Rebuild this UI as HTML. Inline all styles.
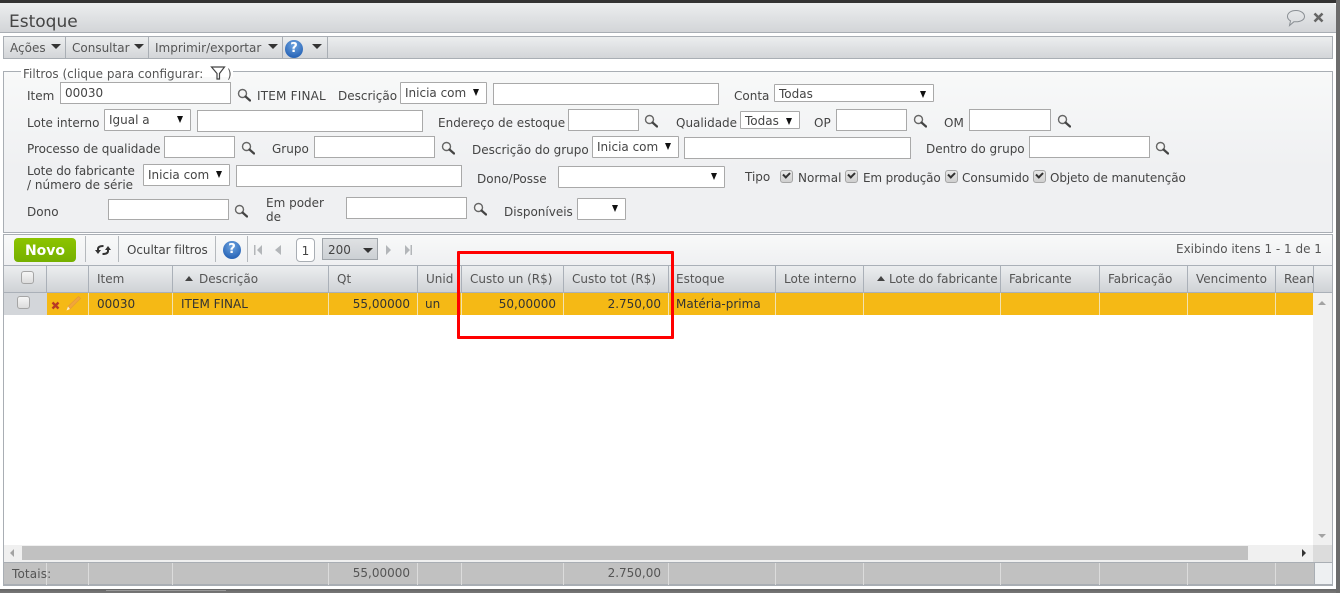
<!DOCTYPE html>
<html lang="pt"><head><meta charset="utf-8"><title>Estoque</title>
<style>
html,body{margin:0;padding:0}
body{width:1340px;height:593px;position:relative;overflow:hidden;background:#fff;font-family:"DejaVu Sans","Liberation Sans",sans-serif;font-size:12px;color:#444}
div,span.a,svg.a{position:absolute;box-sizing:border-box}
.t{white-space:nowrap;line-height:14px;color:#444}
.i{background:#fff;border:1px solid #a9a9a9;color:#444;line-height:21px;padding-left:4px;white-space:nowrap}
.s{background:#fff;border:1px solid #a9a9a9;color:#444;line-height:21px;padding-left:4px;white-space:nowrap;border-radius:1px}
.s:after{content:"";position:absolute;right:7px;top:6px;border-left:3.5px solid transparent;border-right:3.5px solid transparent;border-top:7px solid #111}
.h{top:265px;height:28px;border-right:1px solid #aab0b8;line-height:29px;padding-left:8px;color:#555;white-space:nowrap;overflow:hidden}
.r{top:293px;height:22px;border-right:1px solid #f2e2b0;line-height:22px;padding:0 7px;color:#333;white-space:nowrap;background:#f5b915}
.f{top:563px;height:22px;border-right:1px solid #dcdcdc;line-height:21px;padding:0 7px;color:#555;text-align:right}
.m{border-right:1px solid #a9aeb4;height:22px;top:36px;line-height:24px;color:#555;padding-left:6px;white-space:nowrap}
.ar{position:absolute;top:8px;border-left:5px solid transparent;border-right:5px solid transparent;border-top:5px solid #333}
.c{width:13px;height:13px;background:linear-gradient(#e8e8e8,#cfcfcf);border:1px solid #a5a5a5;border-radius:3px}
.c:after{content:"";position:absolute;left:2px;top:1px;width:5px;height:3px;border-left:2px solid #333;border-bottom:2px solid #333;transform:rotate(-45deg)}
.b{width:13px;height:13px;background:linear-gradient(#f6f6f6,#dcdcdc);border:1px solid #a5a5a5;border-radius:3px}
.q{width:18px;height:18px;border-radius:50%;background:radial-gradient(circle at 50% 30%,#6fa5e0,#2a66b8 75%);color:#fff;font-weight:bold;text-align:center;line-height:18px;font-size:13px}
</style></head><body>
<svg width="0" height="0" style="position:absolute"><defs><symbol id="l" viewBox="0 0 14 14"><circle cx="5.500" cy="5.500" r="4" fill="#f4f4f4" stroke="#666" stroke-width="1.400"/><path d="M8.500 8.500L13 12.500" stroke="#444" stroke-width="2.200" stroke-linecap="round"/></symbol></defs></svg>

<!-- window frame -->
<div style="left:0;top:0;width:1340px;height:3px;background:#333"></div>
<div style="left:1336px;top:0;width:4px;height:593px;background:#6c6c6c"></div>
<div style="left:0;top:3px;width:1336px;height:30px;background:linear-gradient(#eceeef,#d3d5d8);border-bottom:1px solid #a9aeb4;border-top-right-radius:4px"></div>
<div style="left:0;top:586px;width:1336px;height:7px;background:linear-gradient(#fff 0,#fff 3px,#666 3px,#777)"></div>
<div style="left:106px;top:590px;width:120px;height:1px;background:#999"></div>
<div class="t" style="left:9px;top:12px;font-size:17px;line-height:20px;color:#444">Estoque</div>
<svg class="a" style="left:1286px;top:9px" width="20" height="18" viewBox="0 0 20 18"><path d="M10 1.500C5 1.500 1.500 3.900 1.500 7.500c0 2 1.400 3.500 3 4.300L3.500 16.500l4.500-3.800c.7.100 1.300.100 2 .100 5 0 8.500-2.200 8.500-5.300S15 1.500 10 1.500z" fill="none" stroke="#8a8f94" stroke-width="1"/></svg>
<svg class="a" style="left:1313px;top:12px" width="11" height="11" viewBox="0 0 11 11"><path d="M1.500 1.500L9.500 9.500M9.500 1.500L1.500 9.500" stroke="#666" stroke-width="2.600"/></svg>

<!-- menu bar -->
<div style="left:3px;top:36px;width:1330px;height:23px;background:linear-gradient(#eceeef,#d3d5d8);border:1px solid #a9aeb4"></div>
<div class="m" style="left:3px;width:63px;padding-left:7px">Ações<span class="ar" style="left:48px"></span></div>
<div class="m" style="left:66px;width:83px">Consultar<span class="ar" style="left:68px"></span></div>
<div class="m" style="left:149px;width:134px">Imprimir/exportar<span class="ar" style="left:119px"></span></div>
<div class="m" style="left:283px;width:45px"><span class="ar" style="left:29px"></span></div>
<div class="q" style="left:285px;top:40px">?</div>

<!-- filter box -->
<div style="left:3px;top:71px;width:1330px;height:162px;background:linear-gradient(#f8f9f9,#eff0f2 60%);border:1px solid #a9aeb4"></div>
<div class="t" style="left:21px;top:67px;background:#fff;padding:0 3px;color:#555;height:10px;width:212px"></div>
<div class="t" style="left:23px;top:67px;color:#555">Filtros (clique para configurar:</div>
<svg class="a" style="left:210px;top:66px" width="16" height="14" viewBox="0 0 16 14"><path d="M1.500 1h13L9.500 7.500V13H7V7.500z" fill="none" stroke="#444" stroke-width="1.200"/></svg>
<div class="t" style="left:227px;top:67px;color:#555">)</div>

<div class="t" style="left:27px;top:89px">Item</div>
<div class="i" style="left:60px;top:82px;width:171px;height:22px">00030</div>
<svg class="a" style="left:237px;top:88px" width="14" height="14"><use href="#l"/></svg>
<div class="t" style="left:257px;top:89px;letter-spacing:.2px">ITEM FINAL</div>
<div class="t" style="left:338px;top:89px">Descrição</div>
<div class="s" style="left:400px;top:82px;width:87px;height:22px">Inicia com</div>
<div class="i" style="left:493px;top:83px;width:226px;height:22px"></div>
<div class="t" style="left:734px;top:89px">Conta</div>
<div class="s" style="left:774px;top:84px;width:160px;height:18px;line-height:18px">Todas</div>

<div class="t" style="left:27px;top:116px">Lote interno</div>
<div class="s" style="left:104px;top:109px;width:87px;height:22px">Igual a</div>
<div class="i" style="left:197px;top:110px;width:226px;height:22px"></div>
<div class="t" style="left:438px;top:116px">Endereço de estoque</div>
<div class="i" style="left:568px;top:109px;width:71px;height:22px"></div>
<svg class="a" style="left:644px;top:114px" width="14" height="14"><use href="#l"/></svg>
<div class="t" style="left:676px;top:116px">Qualidade</div>
<div class="s" style="left:740px;top:111px;width:60px;height:18px;line-height:18px">Todas</div>
<div class="t" style="left:814px;top:116px">OP</div>
<div class="i" style="left:836px;top:109px;width:71px;height:22px"></div>
<svg class="a" style="left:913px;top:114px" width="14" height="14"><use href="#l"/></svg>
<div class="t" style="left:944px;top:116px">OM</div>
<div class="i" style="left:969px;top:109px;width:82px;height:22px"></div>
<svg class="a" style="left:1057px;top:114px" width="14" height="14"><use href="#l"/></svg>

<div class="t" style="left:27px;top:142px;letter-spacing:-.06px">Processo de qualidade</div>
<div class="i" style="left:164px;top:136px;width:71px;height:22px"></div>
<svg class="a" style="left:241px;top:141px" width="14" height="14"><use href="#l"/></svg>
<div class="t" style="left:272px;top:142px">Grupo</div>
<div class="i" style="left:314px;top:136px;width:121px;height:22px"></div>
<svg class="a" style="left:441px;top:141px" width="14" height="14"><use href="#l"/></svg>
<div class="t" style="left:472px;top:143px">Descrição do grupo</div>
<div class="s" style="left:592px;top:136px;width:87px;height:22px">Inicia com</div>
<div class="i" style="left:684px;top:137px;width:227px;height:22px"></div>
<div class="t" style="left:926px;top:142px">Dentro do grupo</div>
<div class="i" style="left:1029px;top:136px;width:121px;height:22px"></div>
<svg class="a" style="left:1155px;top:141px" width="14" height="14"><use href="#l"/></svg>

<div class="t" style="left:27px;top:164px;letter-spacing:-.1px">Lote do fabricante</div>
<div class="t" style="left:27px;top:178px">/ número de série</div>
<div class="s" style="left:143px;top:164px;width:87px;height:22px">Inicia com</div>
<div class="i" style="left:236px;top:165px;width:226px;height:22px"></div>
<div class="t" style="left:477px;top:172px">Dono/Posse</div>
<div class="s" style="left:558px;top:166px;width:167px;height:22px"></div>
<div class="t" style="left:745px;top:170px">Tipo</div>
<div class="c" style="left:780px;top:170px"></div><div class="t" style="left:798px;top:171px">Normal</div>
<div class="c" style="left:845px;top:170px"></div><div class="t" style="left:863px;top:171px;letter-spacing:-.15px">Em produção</div>
<div class="c" style="left:945px;top:170px"></div><div class="t" style="left:962px;top:171px">Consumido</div>
<div class="c" style="left:1033px;top:170px"></div><div class="t" style="left:1050px;top:171px;letter-spacing:-.1px">Objeto de manutenção</div>

<div class="t" style="left:27px;top:205px">Dono</div>
<div class="i" style="left:108px;top:199px;width:121px;height:21px"></div>
<svg class="a" style="left:234px;top:204px" width="14" height="14"><use href="#l"/></svg>
<div class="t" style="left:266px;top:196px">Em poder</div>
<div class="t" style="left:266px;top:210px">de</div>
<div class="i" style="left:346px;top:197px;width:121px;height:22px"></div>
<svg class="a" style="left:473px;top:202px" width="14" height="14"><use href="#l"/></svg>
<div class="t" style="left:504px;top:205px">Disponíveis</div>
<div class="s" style="left:577px;top:198px;width:49px;height:22px"></div>

<!-- grid -->
<div style="left:3px;top:234px;width:1330px;height:352px;background:#fff;border:1px solid #a9aeb4"></div>
<div style="left:4px;top:235px;width:1328px;height:30px;background:linear-gradient(#f8f9f9,#eff0f2)"></div>
<div style="left:14px;top:238px;width:62px;height:24px;background:linear-gradient(#8cc400,#76b000);border-radius:4px;color:#fff;font-weight:bold;font-size:14px;line-height:27px;text-align:center;font-family:'DejaVu Sans',sans-serif">Novo</div>
<div style="left:85px;top:236px;width:1px;height:26px;background:#b5b9bd"></div>
<svg class="a" style="left:95px;top:243px" width="16" height="14" viewBox="0 0 16 14"><path d="M3 8V6C3 3.800 5 3 8.500 3" fill="none" stroke="#333" stroke-width="2"/><path d="M0 7h6L3 11z" fill="#333"/><path d="M13 6v2c0 2.200-2 3-5.500 3" fill="none" stroke="#333" stroke-width="2"/><path d="M10 7h6L13 3z" fill="#333"/></svg>
<div style="left:118px;top:236px;width:1px;height:26px;background:#b5b9bd"></div>
<div class="t" style="left:127px;top:243px;color:#444;letter-spacing:-.06px">Ocultar filtros</div>
<div style="left:215px;top:236px;width:1px;height:26px;background:#b5b9bd"></div>
<div class="q" style="left:223px;top:241px">?</div>
<div style="left:247px;top:236px;width:1px;height:26px;background:#b5b9bd"></div>
<svg class="a" style="left:253px;top:245px" width="160" height="10" viewBox="0 0 160 10"><g fill="#b3b6b9"><rect x="1" y="0" width="1.500" height="10"/><path d="M9 0v10L4 5zM28 0v10l-6-5zM133 0v10l5-5zM152 0v10l5-5z"/><rect x="157.500" y="0" width="1.500" height="10"/></g></svg>
<div style="left:296px;top:238px;width:19px;height:24px;background:#fff;border:1px solid #a9aeb4;border-radius:4px;text-align:center;line-height:24px;color:#444">1</div>
<div style="left:322px;top:238px;width:56px;height:22px;background:linear-gradient(#dfe1e3,#ccd0d4);border:1px solid #a0a5aa;line-height:22px;padding-left:5px;color:#444">200<span style="position:absolute;left:40px;top:9px;border-left:5px solid transparent;border-right:5px solid transparent;border-top:5px solid #333"></span></div>
<div class="t" style="left:1176px;top:242px;color:#555">Exibindo itens 1 - 1 de 1</div>

<!-- header -->
<div style="left:4px;top:265px;width:1328px;height:28px;background:linear-gradient(#eceef0,#cfd2d6);border-top:1px solid #aab0b8;border-bottom:1px solid #aab0b8"></div>
<div class="h" style="left:4px;width:43px"></div>
<div class="b" style="left:21px;top:271px"></div>
<div class="h" style="left:47px;width:42px"></div>
<div class="h" style="left:89px;width:84px">Item</div>
<div class="h" style="left:173px;width:156px;padding-left:26px">Descrição<span style="position:absolute;left:12px;top:11px;border-left:4px solid transparent;border-right:4px solid transparent;border-bottom:5px solid #444"></span></div>
<div class="h" style="left:329px;width:89px">Qt</div>
<div class="h" style="left:418px;width:44px">Unid</div>
<div class="h" style="left:462px;width:102px">Custo un (R$)</div>
<div class="h" style="left:564px;width:105px">Custo tot (R$)</div>
<div class="h" style="left:669px;width:107px;padding-left:7px">Estoque</div>
<div class="h" style="left:776px;width:88px">Lote interno</div>
<div class="h" style="left:864px;width:137px;padding-left:25px;letter-spacing:-.06px">Lote do fabricante<span style="position:absolute;left:13px;top:11px;border-left:4px solid transparent;border-right:4px solid transparent;border-bottom:5px solid #444"></span></div>
<div class="h" style="left:1001px;width:99px">Fabricante</div>
<div class="h" style="left:1100px;width:88px">Fabricação</div>
<div class="h" style="left:1188px;width:88px">Vencimento</div>
<div class="h" style="left:1276px;width:38px">Reanálise</div>

<!-- row -->
<div style="left:4px;top:293px;width:43px;height:22px;background:#d3d6da"></div>
<div class="b" style="left:17px;top:296px"></div>
<div class="r" style="left:47px;width:42px"></div>
<svg class="a" style="left:51px;top:301px" width="9" height="9" viewBox="0 0 9 9"><path d="M1.500 1.500l6 6M7.500 1.500l-6 6" stroke="#b83a24" stroke-width="2.400"/></svg>
<svg class="a" style="left:65px;top:295px" width="17" height="17" viewBox="0 0 17 17"><path d="M3 11.500L13.500 1.500l2 2L5 14z" fill="#f2a63a" stroke="#e59a35" stroke-width=".7"/><path d="M3 11.500L1.500 15.500 5 14z" fill="#fbeed0"/></svg>
<div class="r" style="left:89px;width:84px;padding-left:8px">00030</div>
<div class="r" style="left:173px;width:156px;padding-left:8px">ITEM FINAL</div>
<div class="r" style="left:329px;width:89px;text-align:right">55,00000</div>
<div class="r" style="left:418px;width:44px">un</div>
<div class="r" style="left:462px;width:102px;text-align:right">50,00000</div>
<div class="r" style="left:564px;width:105px;text-align:right">2.750,00</div>
<div class="r" style="left:669px;width:107px">Matéria-prima</div>
<div class="r" style="left:776px;width:88px"></div>
<div class="r" style="left:864px;width:137px"></div>
<div class="r" style="left:1001px;width:99px"></div>
<div class="r" style="left:1100px;width:88px"></div>
<div class="r" style="left:1188px;width:88px"></div>
<div class="r" style="left:1276px;width:37px;border-right:0"></div>

<!-- scrollbars -->
<div style="left:1313px;top:293px;width:19px;height:252px;background:#f0f0f0"></div>
<div style="left:1318px;top:301px;border-left:4px solid transparent;border-right:4px solid transparent;border-bottom:4px solid #a3a3a3"></div>
<div style="left:1318px;top:534px;border-left:4px solid transparent;border-right:4px solid transparent;border-top:4px solid #a3a3a3"></div>
<div style="left:4px;top:545px;width:1309px;height:17px;background:#f0f0f0"></div>
<div style="left:22px;top:546px;width:1226px;height:14px;background:#c1c1c1"></div>
<div style="left:1313px;top:545px;width:19px;height:17px;background:#dcdcdc"></div>
<div style="left:10px;top:549px;border-top:4px solid transparent;border-bottom:4px solid transparent;border-right:4px solid #a3a3a3"></div>
<div style="left:1302px;top:549px;border-top:4px solid transparent;border-bottom:4px solid transparent;border-left:4px solid #333"></div>

<!-- totals -->
<div style="left:4px;top:562px;width:1310px;height:24px;background:#c1c1c1;border-top:1px solid #a9aeb4;border-bottom:2px solid #a9aeb4"></div>
<div style="left:1314px;top:562px;width:18px;height:24px;background:#eef0f2;border-top:1px solid #a9aeb4;border-bottom:2px solid #a9aeb4;border-left:1px solid #a9aeb4"></div>
<div class="f" style="left:4px;width:43px"></div>
<div class="f" style="left:47px;width:42px"></div>
<div class="f" style="left:89px;width:84px"></div>
<div class="f" style="left:173px;width:156px"></div>
<div class="f" style="left:329px;width:89px">55,00000</div>
<div class="f" style="left:418px;width:44px"></div>
<div class="f" style="left:462px;width:102px"></div>
<div class="f" style="left:564px;width:105px">2.750,00</div>
<div class="f" style="left:669px;width:107px"></div>
<div class="f" style="left:776px;width:88px"></div>
<div class="f" style="left:864px;width:137px"></div>
<div class="f" style="left:1001px;width:99px"></div>
<div class="f" style="left:1100px;width:88px"></div>
<div class="f" style="left:1188px;width:88px"></div>
<div class="t" style="left:12px;top:567px;color:#555;letter-spacing:.15px">Totais:</div>

<!-- red highlight -->
<div style="left:457px;top:251px;width:217px;height:88px;border:3px solid #f00;border-radius:1px"></div>
</body></html>
